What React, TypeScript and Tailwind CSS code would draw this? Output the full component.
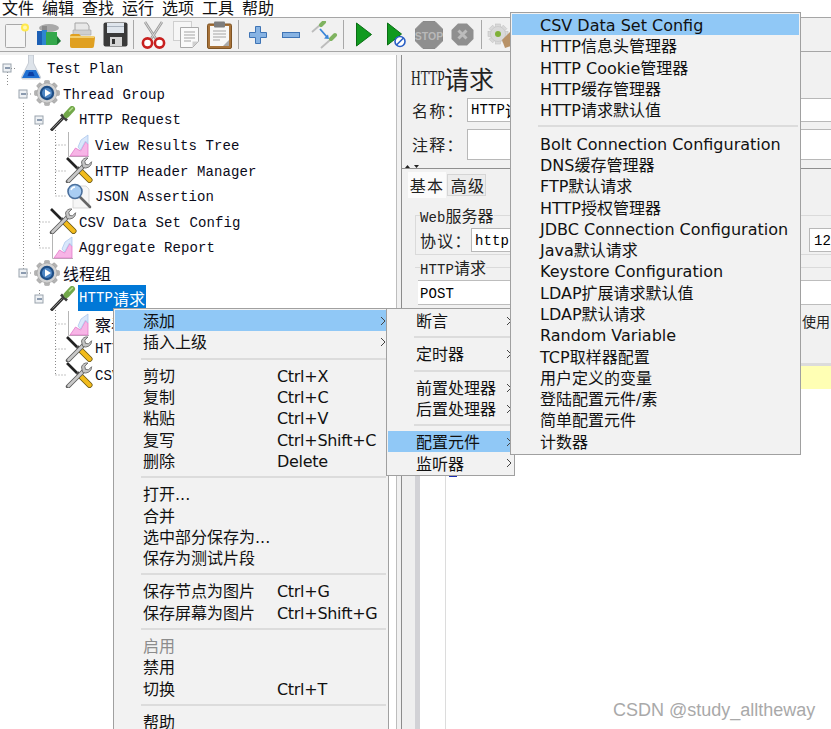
import React from "react";

const MONO = "font-['Liberation_Mono','Noto_Sans_CJK_SC',monospace]";
const UI = "font-['DejaVu_Sans','Noto_Sans_CJK_SC',sans-serif]";

// latin in mono 14px, chinese a bit larger, like the Swing fallback font
const Mixed: React.FC<{ text: string }> = ({ text }) => (
  <>
    {text.split(/([\u4e00-\u9fff：]+)/).map((part, i) =>
      /[\u4e00-\u9fff：]/.test(part) ? (
        <span key={i} className="text-[16px] font-['Noto_Sans_CJK_SC',sans-serif]">
          {part}
        </span>
      ) : (
        <span key={i} className="text-[14px] tracking-[0.1px]">
          {part}
        </span>
      )
    )}
  </>
);

/* ---------- tree icons ---------- */
const Flask = () => (
  <svg width="28" height="25" viewBox="0 0 28 25">
    <path d="M11.5 0h5v8l7 14a1.5 1.5 0 0 1-1.5 2H6a1.5 1.5 0 0 1-1.5-2l7-14z" fill="#dde3ea" stroke="#b4bcc6" strokeWidth="0.7" />
    <path d="M9 15h10l4 8H5z" fill="#1f6fd1" />
    <path d="M12 17h4l1.5 4h-7z" fill="#0b3fa5" />
  </svg>
);

const Gear = () => (
  <svg width="28" height="26" viewBox="0 0 28 26">
    <g fill="#b3b3b3" stroke="#9a9a9a" strokeWidth="0.5">
      {[0, 45, 90, 135, 180, 225, 270, 315].map((a) => (
        <rect key={a} x="11.5" y="0.5" width="5" height="6" rx="1" transform={`rotate(${a} 14 13)`} />
      ))}
      <circle cx="14" cy="13" r="10" fill="#d2d2d2" />
    </g>
    <circle cx="14" cy="13" r="7.2" fill="#1f4e85" />
    <circle cx="14" cy="13" r="5" fill="#4d86c4" />
    <path d="M12 9.2l6 3.8-6 3.8z" fill="#fff" />
  </svg>
);

const Pipette = () => (
  <svg width="28" height="25" viewBox="0 0 28 25">
    <path d="M2 24.5L14.5 11.5" stroke="#2f2f2f" strokeWidth="3" />
    <path d="M3.5 22.5L13.5 12.5" stroke="#9b9b9b" strokeWidth="0.8" />
    <path d="M12 8.5l6 6" stroke="#3d3d3d" strokeWidth="2.6" />
    <path d="M17.5 9l5.5-6" stroke="#72a84a" strokeWidth="6" strokeLinecap="round" />
    <path d="M20.5 5l3-3" stroke="#b5dc8e" strokeWidth="1.6" strokeLinecap="round" />
  </svg>
);

const Chart = () => (
  <svg width="28" height="25" viewBox="0 0 28 25">
    <path d="M3.5 0v24.5H24" fill="none" stroke="#b5b5b5" />
    <path d="M5 24l5.5-8 5 3 5-9 2.5 2v12z" fill="#f7b5e6" stroke="#e06fc4" strokeWidth="0.7" />
    <path d="M13 15l3-7 7-5v9l-2.5-3-5 9z" fill="#d9e7fb" stroke="#a5c2ea" strokeWidth="0.7" />
  </svg>
);

const Tools = () => (
  <svg width="28" height="26" viewBox="0 0 28 26">
    <path d="M2 1l10 10" stroke="#222" strokeWidth="2.6" />
    <path d="M12 10.5l4 4" stroke="#444" strokeWidth="3.4" />
    <path d="M16 14.5l8.5 8.5" stroke="#6a5714" strokeWidth="6" strokeLinecap="round" />
    <path d="M16 14.5l8.5 8.5" stroke="#f2bb1c" strokeWidth="4.4" strokeLinecap="round" />
    <path d="M3 24.5L19 8.5" stroke="#5c5c5c" strokeWidth="4.4" strokeLinecap="round" />
    <path d="M3.5 24L18.5 9" stroke="#c9c9c9" strokeWidth="2.6" strokeLinecap="round" />
    <path d="M16.5 5a6 6 0 0 1 6.5-4l-3.2 3.2.6 3 3 .7 3.2-3.2a6 6 0 0 1-9 5.5z" fill="#c4c4c4" stroke="#6b6b6b" strokeWidth="0.9" />
  </svg>
);

const Lens = () => (
  <svg width="28" height="26" viewBox="0 0 28 26">
    <path d="M8 3h13l3 3v19H8z" fill="#f6f6f6" stroke="#cfcfcf" strokeWidth="0.8" />
    <path d="M15 14l10 10" stroke="#666" strokeWidth="2.6" strokeLinecap="round" />
    <circle cx="10" cy="8.5" r="7" fill="#a9cdf2" stroke="#4a6f9c" strokeWidth="1.6" />
    <path d="M6 7a4.5 4.5 0 0 1 4-3" fill="none" stroke="#fff" strokeWidth="1.4" />
  </svg>
);

/* ---------- toolbar icons ---------- */
const TbNew = () => (
  <svg width="24" height="28" viewBox="0 0 24 28">
    <rect x="0.5" y="3.5" width="20" height="23" rx="1" fill="#f4f4f4" stroke="#a8a8a8" />
    <circle cx="20" cy="6.5" r="4" fill="#ffe94d" />
    <circle cx="20" cy="6.5" r="2" fill="#fff7b0" />
  </svg>
);
const TbTemplates = () => (
  <svg width="25" height="24" viewBox="0 0 25 24">
    <ellipse cx="13" cy="5" rx="10" ry="4" fill="#a9a9a9" />
    <rect x="6" y="3" width="5" height="6" fill="#8a8a8a" />
    <rect x="1" y="8" width="6" height="14" fill="#1c5fb5" />
    <rect x="6" y="7" width="5" height="15" fill="#2e86cf" />
    <rect x="10" y="9" width="11" height="13" fill="#35a84c" />
    <path d="M21 13l4 5-4 4z" fill="#1c7a33" />
  </svg>
);
const TbOpen = () => (
  <svg width="26" height="26" viewBox="0 0 26 26">
    <path d="M6 1h12l2 3v8H6z" fill="#e8e8e8" stroke="#a5a5a5" />
    <path d="M4 8h18v5H4z" fill="#cfcfcf" stroke="#a5a5a5" strokeWidth="0.6" />
    <path d="M1 14a2 2 0 0 1 2-2h7l2 2h12a2 2 0 0 1 2 2l-1 8a2 2 0 0 1-2 2H3a2 2 0 0 1-2-2z" fill="#e0a021" />
    <path d="M1 14h24v2H1z" fill="#f3cf6f" />
  </svg>
);
const TbSave = () => (
  <svg width="25" height="25" viewBox="0 0 25 25">
    <rect x="0.5" y="0.5" width="24" height="24" rx="2" fill="#3a3a3a" />
    <rect x="4" y="1" width="17" height="10" fill="#dfe5ec" />
    <rect x="4" y="4" width="17" height="1" fill="#a9b2bd" />
    <rect x="7" y="15" width="12" height="9" fill="#d5d5d5" />
    <rect x="9" y="17" width="3" height="5" fill="#333" />
  </svg>
);
const TbCut = () => (
  <svg width="25" height="28" viewBox="0 0 25 28">
    <path d="M4 1l11 17M21 1L10 18" stroke="#9c9c9c" strokeWidth="2.6" />
    <path d="M4 1l11 17M21 1L10 18" stroke="#dedede" strokeWidth="0.9" />
    <circle cx="6.5" cy="22" r="4.6" fill="#fff" stroke="#c8201f" strokeWidth="2.6" />
    <circle cx="18.5" cy="22" r="4.6" fill="#fff" stroke="#c8201f" strokeWidth="2.6" />
  </svg>
);
const TbCopy = () => (
  <svg width="27" height="27" viewBox="0 0 27 27">
    <rect x="0.5" y="0.5" width="18" height="19" fill="#f6f6f6" stroke="#cfcfcf" />
    <path d="M7.5 6.5h18v14l-6 6h-12z" fill="#fafafa" stroke="#a9a9a9" />
    <path d="M11 11h11M11 14h11M11 17h11M11 20h7" stroke="#a5a5a5" />
    <path d="M19.5 26v-5.5h6z" fill="#cfcfcf" />
  </svg>
);
const TbPaste = () => (
  <svg width="25" height="28" viewBox="0 0 25 28">
    <rect x="0.5" y="3" width="24" height="24.5" rx="1.5" fill="#a8733a" stroke="#7e5425" />
    <rect x="3" y="5" width="19" height="20" fill="#f7f7f7" />
    <rect x="7" y="0.5" width="11" height="6" rx="1" fill="#7d7d7d" />
    <path d="M6 10h13M6 13h13M6 16h13M6 19h7" stroke="#a5a5a5" />
    <path d="M16 25l6-6v6z" fill="#a9a9a9" />
  </svg>
);
const TbPlus = () => (
  <svg width="18" height="18" viewBox="0 0 18 18">
    <path d="M6.5 0.5h5v6h6v5h-6v6h-5v-6h-6v-5h6z" fill="#87b3e3" stroke="#3f74b5" />
  </svg>
);
const TbMinus = () => (
  <svg width="18" height="6" viewBox="0 0 18 6">
    <rect x="0.5" y="0.5" width="17" height="5" fill="#87b3e3" stroke="#3f74b5" />
  </svg>
);
const TbToggle = () => (
  <svg width="27" height="28" viewBox="0 0 27 28">
    <path d="M1 11L9 4M10 27l9-8" stroke="#bdbdbd" strokeWidth="1.8" />
    <path d="M10 4l3-3M20 18l4-4" stroke="#7fb360" strokeWidth="4" strokeLinecap="round" />
    <path d="M9 8l7 8" stroke="#3a86d8" strokeWidth="1.8" />
    <path d="M18 18l-5-.5 4-4z" fill="#3a86d8" />
  </svg>
);
const TbPlay = () => (
  <svg width="16" height="25" viewBox="0 0 16 25">
    <path d="M0.5 1l15 11.5-15 11.5z" fill="#119a1f" stroke="#0a6d14" />
  </svg>
);
const TbPlayNo = () => (
  <svg width="19" height="26" viewBox="0 0 19 26">
    <path d="M0.5 1l14 11-14 11z" fill="#119a1f" stroke="#0a6d14" />
    <circle cx="13" cy="19.5" r="5" fill="#fff" stroke="#2a5fc5" strokeWidth="1.6" />
    <path d="M9.5 23l7-7" stroke="#2a5fc5" strokeWidth="1.6" />
  </svg>
);
const TbStop = () => (
  <svg width="28" height="28" viewBox="0 0 28 28">
    <path d="M8 0.5h12l7.5 7.5v12L20 27.5H8L0.5 20V8z" fill="#8f8f8f" stroke="#8a8a8a" />
    <text x="14" y="18.5" textAnchor="middle" fontSize="10.5" fontWeight="700" fill="#b9b9b9" fontFamily="'Liberation Sans',sans-serif">STOP</text>
  </svg>
);
const TbShutdown = () => (
  <svg width="23" height="23" viewBox="0 0 23 23">
    <path d="M7 0.5h9l6.5 6.5v9L16 22.5H7L0.5 16V7z" fill="#8f8f8f" />
    <path d="M7.5 7.5l8 8M15.5 7.5l-8 8" stroke="#bcbcbc" strokeWidth="3" />
  </svg>
);
const TbClear = () => (
  <svg width="24" height="28" viewBox="0 0 24 28">
    <g fill="#d9d9d9" stroke="#bdbdbd" strokeWidth="0.5">
      {[0, 45, 90, 135, 180, 225, 270, 315].map((a) => (
        <rect key={a} x="8.5" y="3" width="5" height="5" transform={`rotate(${a} 11 13)`} />
      ))}
      <circle cx="11" cy="13" r="7.5" />
    </g>
    <circle cx="11" cy="13" r="3" fill="#7fb038" />
    <path d="M24 10l-9 9 3 8 6-2z" fill="#b89268" />
  </svg>
);

const ToolSep = () => <div className="h-[29px] w-[1px] bg-[#a8a8a8]" />;

/* ---------- tree ---------- */
type TreeNode = { depth: string; icon: React.ReactNode; label: string; selected?: boolean };

const tree: TreeNode[] = [
  { depth: "pl-[17px]", icon: <Flask />, label: "Test Plan" },
  { depth: "pl-[33px]", icon: <Gear />, label: "Thread Group" },
  { depth: "pl-[49px]", icon: <Pipette />, label: "HTTP Request" },
  { depth: "pl-[65px]", icon: <Chart />, label: "View Results Tree" },
  { depth: "pl-[65px]", icon: <Tools />, label: "HTTP Header Manager" },
  { depth: "pl-[65px]", icon: <Lens />, label: "JSON Assertion" },
  { depth: "pl-[49px]", icon: <Tools />, label: "CSV Data Set Config" },
  { depth: "pl-[49px]", icon: <Chart />, label: "Aggregate Report" },
  { depth: "pl-[33px]", icon: <Gear />, label: "线程组" },
  { depth: "pl-[49px]", icon: <Pipette />, label: "HTTP请求", selected: true },
  { depth: "pl-[65px]", icon: <Chart />, label: "察看结果树" },
  { depth: "pl-[65px]", icon: <Tools />, label: "HTTP信息头管理器" },
  { depth: "pl-[65px]", icon: <Tools />, label: "CSV Data Set Config" },
];

const Expander: React.FC<{ x: number; y: number }> = ({ x, y }) => (
  <g>
    <rect x={x - 4} y={y - 4} width="8" height="8" fill="#eef1f4" stroke="#9aa3ad" />
    <path d={`M${x - 2} ${y}h5`} stroke="#28456b" />
  </g>
);

// y here is relative to the tree panel, which begins at 55
const TreeLines = () => (
  <svg className="absolute left-0 top-0" width="100" height="340" viewBox="0 0 100 340">
    <path
      d="M7.5 17V30M23.5 48V215M11 13.5h6M27 39h6M39.5 70V193M39.5 235V240M27 218h6M55.5 75V141M55.5 255V320M55.5 90h10M55.5 116h10M55.5 141h10M39.5 167h10M39.5 193h10M55.5 269h10M55.5 294h10M55.5 320h10"
      fill="none"
      stroke="#8a8a8a"
      strokeDasharray="1 2"
    />
    <Expander x={7} y={13} />
    <Expander x={23} y={39} />
    <Expander x={39} y={65} />
    <Expander x={23} y={218} />
    <Expander x={39} y={244} />
  </svg>
);

const TreePanel = () => (
  <div className={`relative flex w-[397px] shrink-0 flex-col border-r border-[#bdbdbd] bg-white ${MONO} text-[#0b0b1a]`}>
    <TreeLines />
    {tree.map((n, i) => (
      <div key={i} className={`relative flex h-[25.6px] items-center ${n.depth}`}>
        <div className="w-[28px] shrink-0">{n.icon}</div>
        <div
          className={`ml-[1px] flex h-[25.6px] items-center px-[1px] ${n.selected ? "bg-[#0078d7] text-white" : ""} ${/[\u4e00-\u9fff]/.test(n.label) ? "" : "pt-[4px]"}`}
        >
          <Mixed text={n.label} />
        </div>
      </div>
    ))}
  </div>
);

/* ---------- right side form ---------- */
const Label: React.FC<{ text: string }> = ({ text }) => (
  <span className="whitespace-nowrap text-[16px] tracking-[1.2px] text-[#222] font-['Noto_Sans_CJK_SC',sans-serif]">{text}</span>
);

const Input: React.FC<{ value?: string; className: string }> = ({ value, className }) => (
  <div className={`flex shrink-0 items-center border border-[#b8b8b8] bg-white pl-[3px] ${MONO} text-black ${className}`}>
    {value ? <Mixed text={value} /> : null}
  </div>
);

const RightPanel = () => (
  <div className="flex min-w-0 flex-1 flex-col overflow-hidden bg-[#f1f1f1]">
    <div className="flex h-[43px] items-end whitespace-nowrap pb-[7px] pl-[9px] text-[#222]">
      <span className="inline-block w-[33px] origin-left scale-x-[0.64] text-[21px] leading-[26px] font-['Liberation_Serif',serif]">
        HTTP
      </span>
      <span className="text-[25px] leading-[26px] font-['Noto_Sans_CJK_SC',sans-serif]">请求</span>
    </div>
    <div className="flex h-[24px] items-center pl-[10px]">
      <div className="w-[55px] shrink-0">
        <Label text="名称：" />
      </div>
      <Input value="HTTP请求" className="h-[24px] w-[500px]" />
    </div>
    <div className="mt-[7px] flex h-[31px] items-center pl-[10px]">
      <div className="w-[55px] shrink-0">
        <Label text="注释：" />
      </div>
      <Input className="h-[31px] w-[500px]" />
    </div>
    <div className="flex h-[8px] items-end pl-[3px]">
      <svg width="14" height="3" viewBox="0 0 14 3">
        <path d="M0 3l2.5-3L5 3zM9 0h5l-2.5 3z" fill="#222" />
      </svg>
    </div>
    <div className="h-[1px] bg-[#8f8f8f]" />
    <div className="mt-[3px] flex h-[26px] items-start pl-[6px]">
      <div className="flex h-[26px] w-[38px] items-center justify-center bg-[#fbfbfb]">
        <Label text="基本" />
      </div>
      <div className="ml-[1px] mt-[2px] flex h-[22px] w-[39px] items-center justify-center border border-[#d5d5d5] bg-[#ececec] pl-[3px]">
        <Label text="高级" />
      </div>
    </div>

    {/* web server group */}
    <div className="relative ml-[13px] mt-[17px] h-[40px] w-[500px] shrink-0 border border-[#dadada] pl-[4px] pt-[12px]">
      <span className={`absolute -top-[9px] left-[4px] bg-[#f1f1f1] leading-[16px] text-[#222] ${MONO}`}>
        <Mixed text="Web服务器" />
      </span>
      <div className="flex h-[24px] items-center">
        <div className="w-[51px] shrink-0">
          <Label text="协议：" />
        </div>
        <Input value="http" className="h-[24px] w-[320px] pt-[3px]" />
        <Input value="127" className="ml-[18px] h-[24px] w-[40px] pl-[4px] pt-[3px]" />
      </div>
    </div>

    {/* http request group */}
    <div className="relative ml-[13px] mt-[12px] h-[13px] shrink-0 border-t border-[#dadada]">
      <span className={`absolute -top-[9px] left-[5px] bg-[#f1f1f1] leading-[16px] text-[#222] ${MONO}`}>
        <Mixed text="HTTP请求" />
      </span>
    </div>
    <div className={`ml-[16px] flex h-[25px] shrink-0 items-center border-y border-[#bdbdbd] bg-white pl-[2px] pt-[3px] text-black ${MONO}`}>
      <Mixed text="POST" />
    </div>
    <div className="flex h-[58px] shrink-0 items-start justify-end pt-[6px]">
      <span className="w-[29px] overflow-hidden whitespace-nowrap text-[14px] text-[#222] font-['Noto_Sans_CJK_SC',sans-serif]">
        使用 multipart
      </span>
    </div>
    <div className="h-[3px] shrink-0 bg-[#dcdcdc]" />
    <div className="flex min-h-0 flex-1">
      <div className="w-[13px] shrink-0 bg-[#efefef]" />
      <div className="w-[5px] shrink-0 bg-[#d2d2d6]" />
      <div className="flex flex-1 flex-col bg-white">
        <div className="h-[23px] bg-[#ffffb4]" />
        <div className="ml-[25px] flex-1 border-l border-[#dcdcdc]">
          <div className="ml-[3px] mt-[86px] h-[2px] w-[8px] bg-[#1a2db0]" />
        </div>
      </div>
    </div>
  </div>
);

/* ---------- popup menus ---------- */
type Item =
  | { sep: true }
  | { label: string; shortcut?: string; arrow?: boolean; active?: boolean; disabled?: boolean; sep?: false };

const mainMenu: Item[] = [
  { label: "添加", arrow: true, active: true },
  { label: "插入上级", arrow: true },
  { sep: true },
  { label: "剪切", shortcut: "Ctrl+X" },
  { label: "复制", shortcut: "Ctrl+C" },
  { label: "粘贴", shortcut: "Ctrl+V" },
  { label: "复写", shortcut: "Ctrl+Shift+C" },
  { label: "删除", shortcut: "Delete" },
  { sep: true },
  { label: "打开..." },
  { label: "合并" },
  { label: "选中部分保存为..." },
  { label: "保存为测试片段" },
  { sep: true },
  { label: "保存节点为图片", shortcut: "Ctrl+G" },
  { label: "保存屏幕为图片", shortcut: "Ctrl+Shift+G" },
  { sep: true },
  { label: "启用", disabled: true },
  { label: "禁用" },
  { label: "切换", shortcut: "Ctrl+T" },
  { sep: true },
  { label: "帮助" },
];

const addMenu: Item[] = [
  { label: "断言", arrow: true },
  { sep: true },
  { label: "定时器", arrow: true },
  { sep: true },
  { label: "前置处理器", arrow: true },
  { label: "后置处理器", arrow: true },
  { sep: true },
  { label: "配置元件", arrow: true, active: true },
  { label: "监听器", arrow: true },
];

const configMenu: Item[] = [
  { label: "CSV Data Set Config", active: true },
  { label: "HTTP信息头管理器" },
  { label: "HTTP Cookie管理器" },
  { label: "HTTP缓存管理器" },
  { label: "HTTP请求默认值" },
  { sep: true },
  { label: "Bolt Connection Configuration" },
  { label: "DNS缓存管理器" },
  { label: "FTP默认请求" },
  { label: "HTTP授权管理器" },
  { label: "JDBC Connection Configuration" },
  { label: "Java默认请求" },
  { label: "Keystore Configuration" },
  { label: "LDAP扩展请求默认值" },
  { label: "LDAP默认请求" },
  { label: "Random Variable" },
  { label: "TCP取样器配置" },
  { label: "用户定义的变量" },
  { label: "登陆配置元件/素" },
  { label: "简单配置元件" },
  { label: "计数器" },
];

const Chevron = () => (
  <svg className="absolute right-[1px] top-[6px]" width="6" height="10" viewBox="0 0 6 10">
    <path d="M1 1l4 4-4 4" fill="none" stroke="#444" />
  </svg>
);

const Menu: React.FC<{ items: Item[]; className: string }> = ({ items, className }) => (
  <div className={`absolute overflow-hidden border border-[#a0a0a0] bg-[#f2f2f2] px-[1px] text-[16px] text-[#111] ${UI} ${className}`}>
    {items.map((it, i) =>
      it.sep ? (
        <div key={i} className="flex h-[12px] items-center pl-[26px] pr-[1px]">
          <div className="h-[2px] w-full bg-[#dcdcdc]" />
        </div>
      ) : (
        <div
          key={i}
          className={`relative flex h-[21.3px] items-center whitespace-nowrap pl-[28px] pt-[2px] leading-[19px] ${it.active ? "bg-[#90c8f6]" : ""} ${it.disabled ? "text-[#8c8c8c]" : ""}`}
        >
          <span className="w-[134px] shrink-0">{it.label}</span>
          {it.shortcut ? <span className="tracking-[-0.3px]">{it.shortcut}</span> : null}
          {it.arrow ? <Chevron /> : null}
        </div>
      )
    )}
  </div>
);

const App: React.FC = () => {
  return (
    <div className="relative flex h-[729px] w-[831px] flex-col overflow-hidden bg-white">
      {/* menu bar */}
      <div className="flex h-[17px] shrink-0 items-center gap-[8px] overflow-hidden pl-[2px] text-[16px] leading-[17px] text-[#111] font-['Noto_Sans_CJK_SC',sans-serif]">
        {["文件", "编辑", "查找", "运行", "选项", "工具", "帮助"].map((m) => (
          <span key={m} className="-mt-[2px]">
            {m}
          </span>
        ))}
      </div>

      {/* toolbar */}
      <div className="flex h-[35px] shrink-0 items-center border-y border-[#a6a6a6] bg-[#f1f1f1] pl-[5px]">
        <TbNew />
        <div className="ml-[7px]"><TbTemplates /></div>
        <div className="ml-[8px]"><TbOpen /></div>
        <div className="ml-[8px]"><TbSave /></div>
        <div className="ml-[5px]"><ToolSep /></div>
        <div className="ml-[7px]"><TbCut /></div>
        <div className="ml-[7px]"><TbCopy /></div>
        <div className="ml-[7px]"><TbPaste /></div>
        <div className="ml-[6px]"><ToolSep /></div>
        <div className="ml-[10px]"><TbPlus /></div>
        <div className="ml-[15px]"><TbMinus /></div>
        <div className="ml-[11px]"><TbToggle /></div>
        <div className="ml-[5px]"><ToolSep /></div>
        <div className="ml-[12px]"><TbPlay /></div>
        <div className="ml-[15px]"><TbPlayNo /></div>
        <div className="ml-[9px]"><TbStop /></div>
        <div className="ml-[8px]"><TbShutdown /></div>
        <div className="ml-[7px]"><ToolSep /></div>
        <div className="ml-[5px]"><TbClear /></div>
      </div>

      <div className="h-[3px] shrink-0 bg-[#f1f1f1]" />

      {/* split pane */}
      <div className="flex min-h-0 flex-1">
        <TreePanel />
        <div className="w-[4px] shrink-0 bg-[#f1f1f1]" />
        <div className="w-[1px] shrink-0 bg-[#8c8c8c]" />
        <RightPanel />
      </div>

      <Menu items={mainMenu} className="left-[113px] top-[308px] h-[440px] w-[276px] pt-[1px]" />
      <Menu items={addMenu} className="left-[386px] top-[308px] h-[168px] w-[129px] pt-[1px]" />
      <Menu items={configMenu} className="left-[510px] top-[12px] h-[443px] w-[291px] pt-[1px]" />

      <span className="absolute left-[613px] top-[699px] text-[18px] leading-[22px] text-[#a9a9a9] font-['Liberation_Sans',sans-serif]">
        CSDN @study_alltheway
      </span>
    </div>
  );
};

export default App;
